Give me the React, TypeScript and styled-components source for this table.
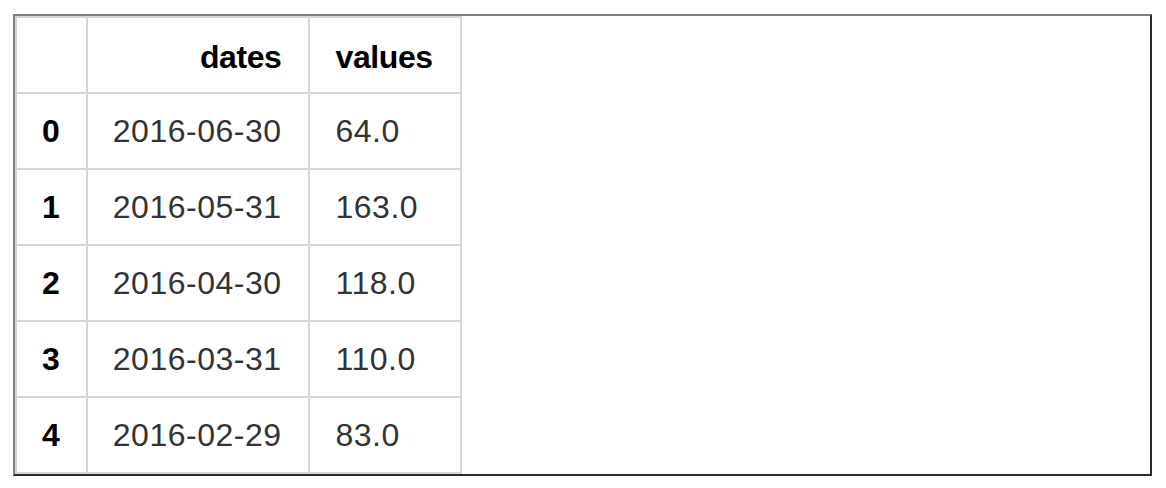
import React from "react";
import styled, { createGlobalStyle } from "styled-components";

const Global = createGlobalStyle`
  html, body { margin: 0; padding: 0; background: #ffffff; }
  body { font-family: "Liberation Sans", Arial, Helvetica, sans-serif; }
`;

const Page = styled.div`
  padding: 14px 14px 0 13px;
`;

const Frame = styled.div`
  border-style: solid;
  border-width: 2px;
  border-color: #808080 #2b2b2b #2b2b2b #808080;
  background: #ffffff;
  display: flex;
  align-items: flex-start;
`;

const Table = styled.table`
  border-collapse: collapse;
  border: 2px solid #d6d6d6;
  font-size: 32px;
  line-height: 37px;
`;

const HeadCell = styled.th`
  border: 2px solid #d6d6d6;
  padding: 21px 27px 16px 25px;
  text-align: right;
  font-weight: bold;
  color: #000000;
  letter-spacing: -0.4px;
`;

const IndexCell = styled.th`
  border: 2px solid #d6d6d6;
  padding: 19px 26px 18px 25px;
  text-align: left;
  font-weight: bold;
  color: #000000;
`;

const DataCell = styled.td`
  border: 2px solid #d6d6d6;
  padding: 19px 27px 18px 25px;
  text-align: left;
  color: #333333;
  letter-spacing: 0.5px;
`;

const rows: [string, string][] = [
  ["2016-06-30", "64.0"],
  ["2016-05-31", "163.0"],
  ["2016-04-30", "118.0"],
  ["2016-03-31", "110.0"],
  ["2016-02-29", "83.0"],
];

export default function App() {
  return (
    <Page>
      <Global />
      <Frame>
        <Table>
          <thead>
            <tr>
              <HeadCell></HeadCell>
              <HeadCell>dates</HeadCell>
              <HeadCell>values</HeadCell>
            </tr>
          </thead>
          <tbody>
            {rows.map(([d, v], i) => (
              <tr key={i}>
                <IndexCell>{i}</IndexCell>
                <DataCell>{d}</DataCell>
                <DataCell>{v}</DataCell>
              </tr>
            ))}
          </tbody>
        </Table>
      </Frame>
    </Page>
  );
}
